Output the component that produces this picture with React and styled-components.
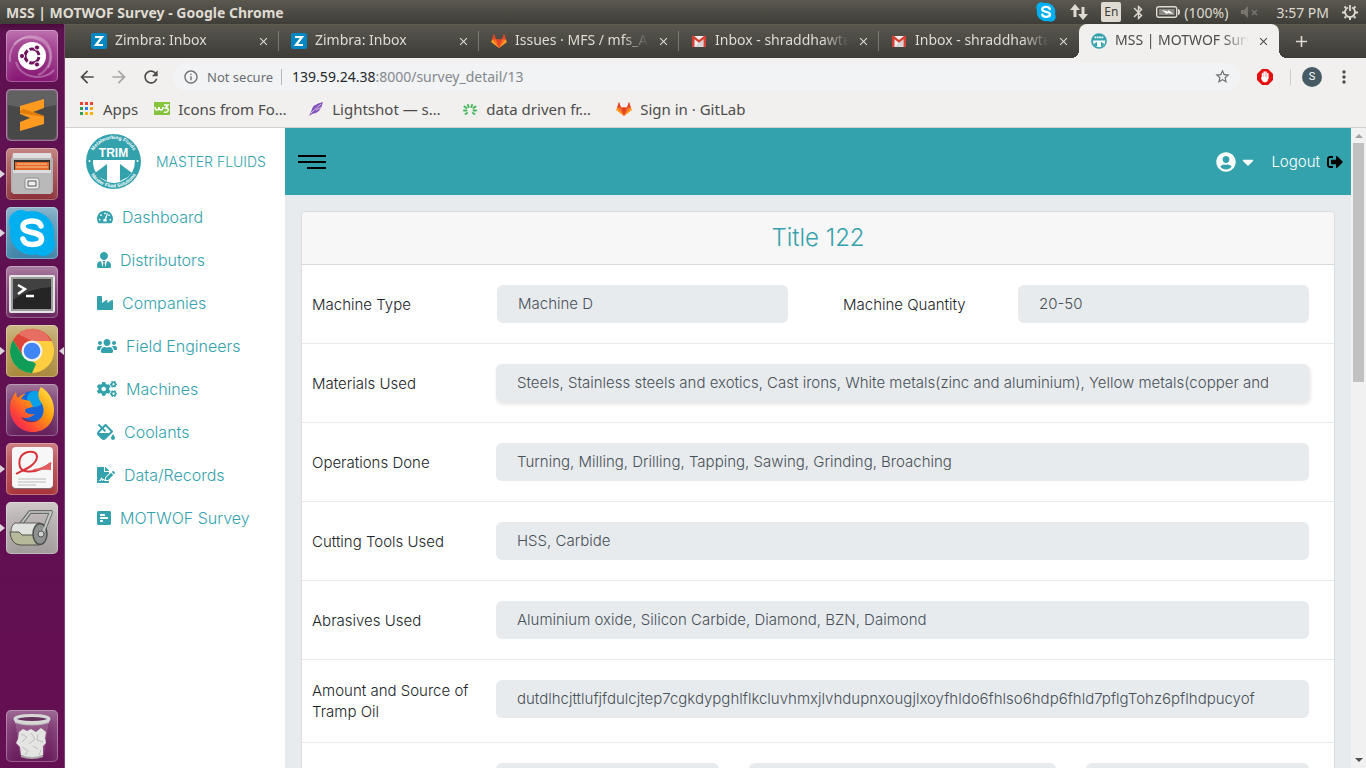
import React from 'react';
import styled, { createGlobalStyle, css } from 'styled-components';
import {
  FaTachometerAlt, FaUserTie, FaIndustry, FaUsers, FaCogs, FaFillDrip,
  FaFileSignature, FaPollH, FaUserCircle, FaCaretDown, FaSignOutAlt,
} from 'react-icons/fa';
import {
  MdArrowBack, MdArrowForward, MdRefresh, MdInfoOutline, MdStarBorder,
  MdMoreVert, MdClose, MdAdd, MdBluetooth,
} from 'react-icons/md';

const TEAL = '#34a2ad';
const CHROME_BG = '#f2f0ee';
const SYSTEM_FONT = '"Noto Sans", "Open Sans", sans-serif';
const PAGE_FONT = 'Inter, "Liberation Sans", sans-serif';

const GlobalStyle = createGlobalStyle`
  * { box-sizing: border-box; }
  body { margin: 0; font-family: ${SYSTEM_FONT}; overflow: hidden; }
  button { border: 0; padding: 0; background: none; font: inherit; color: inherit; cursor: pointer; }
  a { color: inherit; text-decoration: none; }
  svg { display: block; flex: none; }
`;

/* ---------- desktop ---------- */

const Desktop = styled.div`
  display: flex;
  flex-direction: column;
  height: 100vh;
`;

const TopPanel = styled.header`
  display: flex;
  align-items: center;
  justify-content: space-between;
  flex: none;
  height: 24px;
  padding: 0 8px 0 6px;
  color: #dfdbd2;
  font-size: 14px;
  background: linear-gradient(#5b584c 0, #58564d 2px, #3e3d38 100%);
`;

const WindowTitle = styled.span`
  font-weight: 700;
  font-size: 14px;
`;

const Indicators = styled.div`
  display: flex;
  align-items: center;
  gap: 13px;
`;

const Indicator = styled.span`
  display: flex;
  align-items: center;
  gap: 4px;
`;

const BluetoothIcon = styled(MdBluetooth)`
  margin: 0 -4px;
`;

const Clock = styled.span`
  margin-left: 4px;
`;

const KeyboardLayout = styled.span`
  width: 20px;
  border-radius: 2px;
  background: #dfdbd2;
  color: #3c3b37;
  font-size: 12px;
  line-height: 20px;
  text-align: center;
`;

const Workspace = styled.div`
  display: flex;
  flex: 1;
  min-height: 0;
`;

const Launcher = styled.nav`
  display: flex;
  flex-direction: column;
  flex: none;
  gap: 7px;
  width: 65px;
  padding: 6px 7px 6px 6px;
  border-right: 1px solid #7d4672;
  background: linear-gradient(#4a0b3c 0, #5e1150 8px, #640f52 100%);
`;

const LauncherButton = styled.button`
  position: relative;
  width: 52px;
  height: 52px;
  border-radius: 5px;
  background: ${(p) => p.$tint};
  box-shadow: inset 0 0 0 1px rgba(255, 255, 255, 0.28), inset 0 8px 12px rgba(255, 255, 255, 0.18);
  ${(p) => p.$last && css`margin-top: auto;`}
  ${(p) => p.$running && css`
    &::before {
      content: '';
      position: absolute;
      left: -6px;
      top: 22px;
      border: 4px solid transparent;
      border-left: 5px solid #dcd5da;
      border-right: 0;
    }
  `}
  ${(p) => p.$focused && css`
    &::after {
      content: '';
      position: absolute;
      right: -6px;
      top: 22px;
      border: 4px solid transparent;
      border-right: 5px solid #dcd5da;
      border-left: 0;
    }
  `}
`;

/* ---------- browser ---------- */

const Browser = styled.div`
  display: flex;
  flex-direction: column;
  flex: 1;
  min-width: 0;
`;

const TabStrip = styled.div`
  display: flex;
  align-items: stretch;
  flex: none;
  height: 34px;
  padding-left: 14px;
  color: #dfdbd2;
  font-size: 14px;
  background: linear-gradient(#66624f 0, #58564e 1px, #3d3c37 100%);
`;

const Tab = styled.div`
  position: relative;
  display: flex;
  align-items: center;
  gap: 8px;
  flex: 0 1 200px;
  min-width: 0;
  padding: 0 9px 0 12px;
  ${(p) => p.$active ? css`
    color: #4c4c4c;
    background: ${CHROME_BG};
    border-radius: 8px 8px 0 0;
    &::before, &::after {
      content: '';
      position: absolute;
      bottom: 0;
      width: 8px;
      height: 8px;
    }
    &::before { left: -8px; background: radial-gradient(circle at 0 0, transparent 8px, ${CHROME_BG} 8px); }
    &::after { right: -8px; background: radial-gradient(circle at 100% 0, transparent 8px, ${CHROME_BG} 8px); }
  ` : css`
    &::after {
      content: '';
      position: absolute;
      right: 0;
      top: 7px;
      width: 1px;
      height: 20px;
      background: ${p.$beforeActive ? 'transparent' : '#7b796f'};
    }
  `}
`;

const TabTitle = styled.button`
  flex: 1;
  min-width: 0;
  overflow: hidden;
  white-space: nowrap;
  text-align: left;
  line-height: 20px;
  padding-bottom: 2px;
  mask-image: linear-gradient(90deg, #000 calc(100% - 26px), transparent 100%);
`;

const NewTab = styled.button`
  margin-left: 13px;
`;

const Toolbar = styled.div`
  display: flex;
  align-items: center;
  flex: none;
  gap: 12px;
  height: 37px;
  padding: 0 12px;
  color: #4c4c4c;
  background: ${CHROME_BG};
`;

const ToolButton = styled.button`
  opacity: ${(p) => (p.disabled ? 0.45 : 1)};
`;

const AddressBar = styled.div`
  display: flex;
  align-items: center;
  flex: 1;
  min-width: 0;
  height: 28px;
  margin: 0 5px 0 0;
  padding: 0 9px 0 10px;
  border-radius: 14px;
  color: #6b6e72;
  font-size: 13px;
  background: #f1f3f5;
`;

const Security = styled.button`
  display: flex;
  align-items: center;
  gap: 8px;
  padding-right: 8px;
  border-right: 1px solid #b5b7ba;
  line-height: 16px;
  white-space: nowrap;
`;

const Address = styled.a`
  flex: 1;
  padding-left: 10px;
  color: #85888c;
  font-size: 14px;
  strong { font-weight: 400; color: #26282b; }
`;

const ToolDivider = styled.span`
  width: 1px;
  height: 16px;
  margin: 0 -1px 0 5px;
  background: #cfcdcb;
`;

const Avatar = styled.button`
  width: 20px;
  height: 20px;
  border-radius: 50%;
  color: #fff;
  background: #465a65;
  font: 11px/20px Roboto, sans-serif;
`;

const Bookmarks = styled.nav`
  display: flex;
  align-items: center;
  flex: none;
  height: 33px;
  gap: 16px;
  padding: 0 14px 4px;
  color: #4c4c4c;
  font-size: 15px;
  background: ${CHROME_BG};
  border-bottom: 1px solid #cfd0cf;
`;

const Bookmark = styled.a`
  display: flex;
  align-items: center;
  gap: 8px;
  width: ${(p) => (p.$short ? 'auto' : '138px')};
  line-height: 20px;
  white-space: nowrap;
`;

/* ---------- web page ---------- */

const Page = styled.div`
  display: flex;
  flex: 1;
  min-height: 0;
  font-family: ${PAGE_FONT};
  font-weight: 300;
  background: #e7ebee;
`;

const Sidebar = styled.aside`
  flex: none;
  width: 220px;
  color: ${TEAL};
  background: #fff;
`;

const Brand = styled.a`
  display: flex;
  align-items: center;
  gap: 15px;
  height: 67px;
  padding-left: 21px;
  font-size: 14px;
`;

const Menu = styled.ul`
  margin: 0;
  padding: 0 0 0 32px;
  list-style: none;
`;

const MenuLink = styled.a`
  display: flex;
  align-items: center;
  gap: 9px;
  height: 43px;
  font-size: 16px;
  svg { width: ${(p) => p.$iconWidth}px; height: 16px; }
`;

const Main = styled.main`
  flex: 1;
  min-width: 0;
  overflow: hidden;
`;

const AppBar = styled.header`
  display: flex;
  align-items: center;
  justify-content: space-between;
  height: 67px;
  padding: 0 8px 0 13px;
  color: #fff;
  background: ${TEAL};
`;

const Account = styled.div`
  display: flex;
  align-items: center;
  gap: 14px;
  font-size: 15px;
`;

const IconButton = styled.button`
  display: flex;
  align-items: center;
  gap: 3px;
`;

const LogoutLink = styled.a`
  display: flex;
  align-items: center;
  gap: 7px;
  svg { color: #000; }
`;

const Card = styled.section`
  margin: 16px;
  border: 1px solid #dadddf;
  border-radius: 4px;
  background: #fff;
`;

const CardTitle = styled.h1`
  margin: 0;
  border-bottom: 1px solid #d8d9da;
  border-radius: 4px 4px 0 0;
  color: ${TEAL};
  background: #f7f7f7;
  font-size: 24px;
  font-weight: 300;
  line-height: 52px;
  text-align: center;
`;

const Row = styled.div`
  display: grid;
  grid-template-columns: ${(p) => p.$columns || '184px 1fr'};
  align-items: start;
  padding: 20px 25px 20px 10px;
  border-bottom: 1px solid #e7ebee;
`;

const Label = styled.label`
  align-self: center;
  padding: 0 20px 0 ${(p) => (p.$inset ? '55px' : '0')};
  color: #212529;
  font-size: 15px;
  line-height: 21px;
`;

const Field = styled.input`
  width: 100%;
  min-width: 0;
  height: 38px;
  padding: 0 41px 1px 21px;
  border: 0;
  border-radius: 6px;
  color: #495057;
  background: #e7ebee;
  font: 300 15px ${PAGE_FONT};
  outline: 0;
  ${(p) => p.$raised && css`box-shadow: 1px 2px 4px rgba(0, 0, 0, 0.12);`}
`;

const FieldGroup = styled.div`
  display: grid;
  grid-template-columns: 223fr 307fr 223fr;
  gap: 30px;
`;

const ScrollBar = styled.div`
  display: flex;
  flex-direction: column;
  align-items: center;
  flex: none;
  width: 15px;
  padding: 6px 0;
  background: #f1f1f1;
`;

const ScrollArrow = styled.span`
  border: 4px solid transparent;
  ${(p) => p.$down
    ? css`border-top-color: #505050; border-bottom: 0; margin-top: auto;`
    : css`border-bottom-color: #a3a3a3; border-top: 0;`}
`;

const ScrollThumb = styled.span`
  width: 11px;
  height: 38%;
  margin-top: 5px;
  background: #c1c1c1;
`;

/* ---------- drawings ---------- */

const UbuntuIcon = () => (
  <svg width="52" height="52" viewBox="0 0 52 52">
    <g fill="none" stroke="#fff" strokeOpacity=".28" strokeWidth="2">
      <path d="M4 32C2 14 18 2 34 8c12 5 14 20 8 30" />
      <path d="M8 14C20 2 42 8 44 24c1 10-4 18-12 21" />
      <path d="M48 40C38 52 14 48 10 32" />
    </g>
    <circle cx="26" cy="26" r="14" fill="#fff" />
    <circle cx="26" cy="26" r="7" fill="none" stroke="#71135d" strokeWidth="3" strokeDasharray="12.6 2" strokeDashoffset="-1" />
    <g fill="#71135d" stroke="#fff">
      <circle cx="16" cy="26" r="2.6" /><circle cx="31" cy="17.5" r="2.6" /><circle cx="31" cy="34.5" r="2.6" />
    </g>
  </svg>
);

const SublimeIcon = () => (
  <svg width="52" height="52" viewBox="0 0 52 52">
    <rect x="2" y="2" width="48" height="48" rx="4" fill="#484848" />
    <path d="M2 6q0-4 4-4h40q4 0 4 4v10Q26 22 2 16z" fill="#777" opacity=".55" />
    <path d="M14 17 38 10v9l-11 4 11 4v8L14 42v-9l10-4-10-4z" fill="#ff9a20" />
    <path d="m14 24 24 4v-1l-11-4-10-3-3 2z" fill="#e07d08" />
  </svg>
);

const FilesIcon = () => (
  <svg width="52" height="52" viewBox="0 0 52 52">
    <path d="M7 5h38l2 14H5z" fill="#dedede" />
    <path d="M5 10h42v33q0 2-2 2H7q-2 0-2-2z" fill="#b3b3b3" />
    <path d="M8 12h36v10H8z" fill="#34302c" />
    <path d="M9 14h34v8H9z" fill="#e4682d" /><path d="M11 16h30M10 19h32" stroke="#ffc98b" />
    <path d="M7 22h38v24H7z" fill="#b9b9b9" /><path d="M7 22h38v3H7z" fill="#ddd" />
    <rect x="19" y="30" width="14" height="11" rx="2" fill="#ececec" stroke="#8a8a8a" />
    <rect x="22" y="33" width="8" height="5" fill="#eee" stroke="#555" />
  </svg>
);

const SkypeBlob = ({ size }) => (
  <svg width={size} height={size} viewBox="0 0 52 52">
    <circle cx="26" cy="26" r="22" fill="#00aff0" />
    <circle cx="15" cy="15" r="12" fill="#00aff0" /><circle cx="37" cy="37" r="12" fill="#00aff0" />
    <path d="M35 19c-1-4-5-5-9-5-5 0-9 2-9 5.500 0 4 4 5 9 6s9.500 2 9.500 6.500c0 4-4 5.500-9.500 5.500s-8-2-9-5.500" fill="none" stroke="#fff" strokeWidth="5.5" strokeLinecap="round" />
  </svg>
);

const TerminalIcon = () => (
  <svg width="52" height="52" viewBox="0 0 52 52">
    <rect x="3" y="9" width="46" height="38" rx="2" fill="#e4e4e4" />
    <rect x="5" y="11" width="42" height="34" fill="#9c9c9c" />
    <rect x="7" y="13" width="38" height="30" fill="#252525" />
    <path d="M7 13h38v8Q24 22 7 34z" fill="#555" opacity=".6" />
    <path d="m12 19 7 4-7 5M20 30h8" fill="none" stroke="#fff" strokeWidth="2.4" />
  </svg>
);

const ChromeIcon = () => (
  <svg width="52" height="52" viewBox="0 0 52 52">
    <circle cx="26" cy="26" r="22" fill="#ffcd40" />
    <path d="M7 15a22 22 0 0 1 39 1H26l-9 15z" fill="#db4437" />
    <path d="M12 9q14-10 28 0l5 7H26z" fill="#ef8a80" opacity=".6" />
    <path d="M7 15 17 31l9 5 4 3-4 9A22 22 0 0 1 7 15z" fill="#0f9d58" />
    <circle cx="26" cy="26" r="10.5" fill="#f1f1f1" /><circle cx="26" cy="26" r="8.3" fill="#4285f4" />
  </svg>
);

const FirefoxIcon = () => (
  <svg width="52" height="52" viewBox="0 0 52 52">
    <defs>
      <linearGradient id="fox" x1="1" y1="0" x2="0" y2="1">
        <stop offset="0" stopColor="#fff04f" /><stop offset=".4" stopColor="#ff9a0e" /><stop offset=".75" stopColor="#ff3d3d" /><stop offset="1" stopColor="#e5156b" />
      </linearGradient>
    </defs>
    <circle cx="27" cy="22" r="15" fill="#1565d8" /><circle cx="29" cy="15" r="8" fill="#0aa0e8" />
    <path d="M10 8q-7 8-6 18c1 12 10 22 23 22 12 0 21-9 21-22 0-9-4-17-13-23-4 6-3 11 0 15 4 6 4 15-4 19-7 3-14 0-16-4 5 2 9 1 14-3-5 1-10-1-10-4 1-2 4-2 8-3l-3-6-9-2q2-4 5-5-5 0-8 4-2-2-2-6z" fill="url(#fox)" />
  </svg>
);

const PdfIcon = () => (
  <svg width="52" height="52" viewBox="0 0 52 52">
    <rect x="6" y="6" width="41" height="40" rx="4" fill="#777" /><rect x="6" y="4" width="41" height="41" rx="4" fill="#f7f7f7" />
    <path d="M10 31C17 27 30 23 31 14c0-6-7-6-12-4-8 4-7 17 0 18 9 2 17-1 26-8" fill="none" stroke="#d8323a" strokeWidth="2" />
    <path d="M28 26q9-1 17-7v8q-8-1-20 1z" fill="#e35c60" />
    <path d="M12 36h28M12 39h28M12 42h18" stroke="#bbb" />
  </svg>
);

const RollerIcon = () => (
  <svg width="52" height="52" viewBox="0 0 52 52">
    <path d="M15 22 24 10h21L36 33" fill="none" stroke="#6a6e6b" strokeWidth="4" strokeLinejoin="round" />
    <path d="M15 22 24 10h21L36 33" fill="none" stroke="#c6cac7" strokeWidth="1.6" />
    <path d="M9 21h25v21H12q-8-3-7-12 0-7 4-9z" fill="#e0e2de" stroke="#5e605c" />
    <path d="M4 30h9l3 3h17v10H14q-9-1-10-13z" fill="#b7ba9a" stroke="#50524a" />
    <ellipse cx="34" cy="32" rx="7" ry="10.5" fill="#8d918f" stroke="#4d504e" strokeWidth="1.5" />
    <path d="M45 10 36 33" stroke="#c6cac7" strokeWidth="2" />
    <circle cx="35" cy="32" r="3" fill="#d0d2d0" stroke="#555" />
  </svg>
);

const TrashIcon = () => (
  <svg width="52" height="52" viewBox="0 0 52 52">
    <path d="m9 10 5 35q12 5 24 0l5-35z" fill="#fff" opacity=".15" />
    <path d="m13 22 4-3 4 2 4-2 5 3 5-4 5 4-1 6 1 5-3 3v9q-11 5-22 0l-1-8-4-4 2-4z" fill="#e4e4e2" />
    <path d="m15 24 6 3-5 5m9-9 4 6-6 5m9-10-1 6 6 2m-21 5 6 4-3 4m8-9 5 3m1 6 2-5" fill="none" stroke="#bdbdbd" />
    <path d="M9 10q17 7 34 0v3q-17 5-34 0z" fill="#bfbfbf" />
    <ellipse cx="26" cy="9" rx="17" ry="3.5" fill="#64305b" stroke="#d7d7d7" strokeWidth="3" />
    <path d="M15 46q11 4 22 0" fill="none" stroke="#aaa" strokeWidth="2" />
  </svg>
);

const ZimbraIcon = () => (
  <svg width="16" height="16" viewBox="0 0 16 16">
    <rect width="16" height="16" rx="2" fill="#0087c3" />
    <path d="M4 4h7L5 12h7" fill="none" stroke="#fff" strokeWidth="2.2" />
  </svg>
);

const GitlabIcon = () => (
  <svg width="16" height="16" viewBox="0 0 16 16">
    <path d="M3 1 .3 9 8 15l7.700-6L13 1l-2 5.500H5z" fill="#fc6d26" />
    <path d="m5 6.500 3 8.500 3-8.500z" fill="#e24329" />
    <path d="M.3 9 8 15 1.400 6.500zM15.700 9 8 15l6.600-8.500z" fill="#fca326" />
    <path d="m3 1 2 5.500H1.200zM13 1l-2 5.500h3.800z" fill="#e24329" />
  </svg>
);

const GmailIcon = () => (
  <svg width="16" height="16" viewBox="0 0 16 16">
    <path d="M1 3h14v11H1z" fill="#eee" /><path d="m8 9 4-3v8H4z" fill="#d6d6d6" />
    <path d="M1 14V3l1.500-.5L8 7l5.500-4.500L15 3v11h-2.500V6.200L8 9.800 3.500 6.200V14z" fill="#d54235" />
  </svg>
);

const TrimMark = () => (
  <>
    <path d="M7.200 26h41.600v2A20.800 20.800 0 0 1 7 28z" fill="#fff" />
    <path d="M21 30v17L13 43l-4-4zM34 30v17l8-4 4-4z" fill={TEAL} />
  </>
);

const TrimFavicon = () => (
  <svg width="16" height="16" viewBox="0 0 55 55">
    <circle cx="27.5" cy="27.5" r="27" fill={TEAL} />
    <path d="M12 15h31" stroke="#fff" strokeWidth="6" strokeDasharray="6 2" />
    <TrimMark />
  </svg>
);

const TrimLogo = () => (
  <svg width="55" height="55" viewBox="0 0 55 55" role="img" aria-label="TRIM">
    <defs>
      <path id="ring-top" d="M5 27.500a22.500 22.500 0 0 1 45 0" />
      <path id="ring-bottom" d="M1.500 27.500a26 26 0 0 0 52 0" />
    </defs>
    <circle cx="27.5" cy="27.5" r="27.5" fill={TEAL} />
    <TrimMark />
    <g fill="#fff" fontFamily="Liberation Sans, sans-serif" fontWeight="700" textAnchor="middle">
      <text x="27.5" y="22.5" fontSize="12">TRIM</text>
      <text fontSize="5"><textPath href="#ring-top" startOffset="50%">Metalworking Fluids</textPath></text>
      <text fontSize="5"><textPath href="#ring-bottom" startOffset="50%">Master Fluid Solutions</textPath></text>
    </g>
    <circle cx="3.5" cy="27" r="1" fill="#fff" /><circle cx="51.5" cy="27" r="1" fill="#fff" />
  </svg>
);

const AppsIcon = () => (
  <svg width="16" height="16" viewBox="-1 -1 16 16">
    <path d="M0 0h3v3H0zM5 0h3v3H5zM10 0h3v3h-3z" fill="#ea4335" />
    <path d="M0 5h3v3H0z" fill="#2f9e50" /><path d="M5 5h3v3H5z" fill="#2f80ed" /><path d="M10 5h3v3h-3z" fill="#f6a609" />
    <path d="M0 10h3v3H0z" fill="#2f9e50" /><path d="M5 10h3v3H5zM10 10h3v3h-3z" fill="#f6b409" />
  </svg>
);

const W3Icon = () => (
  <svg width="16" height="16" viewBox="0 0 16 16">
    <path d="M0 1h16v13H0z" fill="#86c440" />
    <path d="M1 6q0 3 2 3t2-3q0 3 2 3t2-3M10 4h4l-2.500 3Q15 7 14 10q-1 2-4 1" fill="none" stroke="#fff" strokeWidth="1.5" />
  </svg>
);

const FeatherIcon = () => (
  <svg width="16" height="16" viewBox="0 0 16 16">
    <path d="M15 1Q4 3 3 11l-2 4 3-2Q13 12 15 1z" fill="#8253b8" /><path d="M13 3 3 12M14 6l-6 3" stroke="#d9c2ee" />
  </svg>
);

const LeavesIcon = () => (
  <svg width="16" height="16" viewBox="0 0 16 16" fill="none" stroke="#43b85c" strokeWidth="2" strokeLinecap="round">
    <path d="m6 4 .6 2M10 4l-.6 2M2.500 5.500l2 1.500M13.500 5.500l-2 1.500M2 9.500h2.500M14 9.500h-2.500M3.500 13l1.500-1M12.500 13l-1.500-1" />
  </svg>
);

const BlockIcon = () => (
  <svg width="16" height="16" viewBox="0 0 16 16">
    <path d="M5 0h6l5 5v6l-5 5H5l-5-5V5z" fill="#e60f0f" />
    <path d="M5.500 9V4.500M7.200 8V3M9 8V3M10.800 9V4.500" stroke="#fff" strokeWidth="1.5" strokeLinecap="round" />
    <path d="M4.800 8h6.700q0 5-3.500 5.500Q5 13 4 9z" fill="#fff" />
  </svg>
);

const TransferIcon = () => (
  <svg width="18" height="18" viewBox="0 0 18 18" fill="#dfdbd2">
    <path d="M5 1 0 7h3.500v7h3V7H10zM13 17l5-6h-3.500V4h-3v7H8z" />
  </svg>
);

const BatteryIcon = () => (
  <svg width="24" height="14" viewBox="0 0 24 14">
    <rect x=".7" y="1.7" width="20" height="10.6" rx="2" fill="none" stroke="#dfdbd2" strokeWidth="1.4" />
    <rect x="3" y="4" width="15.5" height="6" fill="#8c8982" /><path d="M22 4q2 0 2 3t-2 3z" fill="#dfdbd2" />
    <path d="m6 5 6 1.500.5-1.500 5 4-6-1-.5 1.500z" fill="#fff" />
  </svg>
);

const MutedIcon = () => (
  <svg width="18" height="14" viewBox="0 0 18 14">
    <path d="M0 5h3l4-4v12L3 9H0z" fill="#77756e" /><path d="m11 5 5 5m0-5-5 5" stroke="#77756e" strokeWidth="1.5" />
  </svg>
);

const PowerIcon = () => (
  <svg width="16" height="16" viewBox="0 0 16 16" fill="none" stroke="#dfdbd2">
    <path d="M6 3.500a5 5 0 1 0 4 0M8 1v6" strokeWidth="1.8" />
    <path d="m2.500 2.500 1.500 1.500m9.500-1.500-1.500 1.500M0 8.500h3m10 0h3M2.500 14l1.500-1.500m9.500 1.500-1.500-1.500M8 13.500V16" strokeWidth="2" />
  </svg>
);

const HamburgerIcon = () => (
  <svg width="28" height="16" viewBox="0 0 28 16">
    <path d="M0 2h28M0 8h28M9 14h19" stroke="#000" strokeWidth="2" />
  </svg>
);

/* ---------- data ---------- */

const LAUNCHER = [
  { name: 'Search', icon: <UbuntuIcon />, tint: 'linear-gradient(#b0569f, #861673)' },
  { name: 'Sublime Text', icon: <SublimeIcon />, tint: '#6d4a66' },
  { name: 'Files', icon: <FilesIcon />, tint: 'linear-gradient(#b8706c, #8c3039)', running: true },
  { name: 'Skype', icon: <SkypeBlob size={52} />, tint: 'linear-gradient(#76a8c2, #3f82a9)', running: true },
  { name: 'Terminal', icon: <TerminalIcon />, tint: 'linear-gradient(#9a6590, #66235a)' },
  { name: 'Google Chrome', icon: <ChromeIcon />, tint: 'linear-gradient(#c3aa6d, #a9883c)', running: true, focused: true },
  { name: 'Firefox', icon: <FirefoxIcon />, tint: 'linear-gradient(#8d5a85, #641f5b)' },
  { name: 'Document Viewer', icon: <PdfIcon />, tint: 'linear-gradient(#c3666a, #a93239)', running: true },
  { name: 'Disk Cleaner', icon: <RollerIcon />, tint: 'linear-gradient(#c6bfc0, #a29b9c)', running: true },
  { name: 'Trash', icon: <TrashIcon />, tint: 'linear-gradient(#8a4a80, #681b5a)', last: true },
];

const TABS = [
  { title: 'Zimbra: Inbox', icon: <ZimbraIcon /> },
  { title: 'Zimbra: Inbox', icon: <ZimbraIcon /> },
  { title: 'Issues · MFS / mfs_A', icon: <GitlabIcon /> },
  { title: 'Inbox - shraddhawte', icon: <GmailIcon /> },
  { title: 'Inbox - shraddhawte', icon: <GmailIcon />, beforeActive: true },
  { title: 'MSS | MOTWOF Surv', icon: <TrimFavicon />, active: true },
];

const BOOKMARKS = [
  { title: 'Apps', icon: <AppsIcon />, short: true },
  { title: 'Icons from Fo…', icon: <W3Icon /> },
  { title: 'Lightshot — s…', icon: <FeatherIcon /> },
  { title: 'data driven fr…', icon: <LeavesIcon /> },
  { title: 'Sign in · GitLab', icon: <GitlabIcon /> },
];

/* name, icon, icon width at a height of 16px */
const MENU = [
  ['Dashboard', FaTachometerAlt, 16],
  ['Distributors', FaUserTie, 14],
  ['Companies', FaIndustry, 16],
  ['Field Engineers', FaUsers, 20],
  ['Machines', FaCogs, 20],
  ['Coolants', FaFillDrip, 18],
  ['Data/Records', FaFileSignature, 18],
  ['MOTWOF Survey', FaPollH, 14],
];

const ANSWERS = [
  { id: 'materials', label: 'Materials Used', value: 'Steels, Stainless steels and exotics, Cast irons, White metals(zinc and aluminium), Yellow metals(copper and', raised: true },
  { id: 'operations', label: 'Operations Done', value: 'Turning, Milling, Drilling, Tapping, Sawing, Grinding, Broaching' },
  { id: 'tools', label: 'Cutting Tools Used', value: 'HSS, Carbide' },
  { id: 'abrasives', label: 'Abrasives Used', value: 'Aluminium oxide, Silicon Carbide, Diamond, BZN, Daimond' },
  { id: 'tramp', label: 'Amount and Source of Tramp Oil', value: 'dutdlhcjttlufjfdulcjtep7cgkdypghlflkcluvhmxjlvhdupnxougjlxoyfhldo6fhlso6hdp6fhld7pflgTohz6pflhdpucyof' },
];

export default function App() {
  return (
    <Desktop>
      <GlobalStyle />
      <TopPanel>
        <WindowTitle>MSS | MOTWOF Survey - Google Chrome</WindowTitle>
        <Indicators>
          <SkypeBlob size={22} />
          <TransferIcon />
          <KeyboardLayout>En</KeyboardLayout>
          <BluetoothIcon size={17} />
          <Indicator><BatteryIcon />(100%)</Indicator>
          <MutedIcon />
          <Clock>3:57 PM</Clock>
          <PowerIcon />
        </Indicators>
      </TopPanel>
      <Workspace>
        <Launcher>
          {LAUNCHER.map((a) => (
            <LauncherButton key={a.name} aria-label={a.name} $tint={a.tint} $running={a.running} $focused={a.focused} $last={a.last}>
              {a.icon}
            </LauncherButton>
          ))}
        </Launcher>
        <Browser>
          <TabStrip>
            {TABS.map((t, i) => (
              <Tab key={i} $active={t.active} $beforeActive={t.beforeActive}>
                {t.icon}
                <TabTitle>{t.title}</TabTitle>
                <button aria-label="Close tab"><MdClose size={13} /></button>
              </Tab>
            ))}
            <NewTab aria-label="New tab"><MdAdd size={19} /></NewTab>
          </TabStrip>
          <Toolbar>
            <ToolButton aria-label="Back"><MdArrowBack size={20} /></ToolButton>
            <ToolButton aria-label="Forward" disabled><MdArrowForward size={20} /></ToolButton>
            <ToolButton aria-label="Reload"><MdRefresh size={20} /></ToolButton>
            <AddressBar>
              <Security><MdInfoOutline size={16} />Not secure</Security>
              <Address href="#survey"><strong>139.59.24.38</strong>:8000/survey_detail/13</Address>
              <button aria-label="Bookmark this page"><MdStarBorder size={17} /></button>
            </AddressBar>
            <ToolButton aria-label="Ad blocker"><BlockIcon /></ToolButton>
            <ToolDivider />
            <Avatar>S</Avatar>
            <ToolButton aria-label="Menu"><MdMoreVert size={20} /></ToolButton>
          </Toolbar>
          <Bookmarks>
            {BOOKMARKS.map((b) => (
              <Bookmark key={b.title} href="#bookmark" $short={b.short}>{b.icon}<span>{b.title}</span></Bookmark>
            ))}
          </Bookmarks>
          <Page>
            <Sidebar>
              <Brand href="#home"><TrimLogo />MASTER FLUIDS</Brand>
              <Menu>
                {MENU.map(([name, Icon, iconWidth]) => (
                  <li key={name}><MenuLink href="#menu" $iconWidth={iconWidth}><Icon />{name}</MenuLink></li>
                ))}
              </Menu>
            </Sidebar>
            <Main>
              <AppBar>
                <button aria-label="Toggle sidebar"><HamburgerIcon /></button>
                <Account>
                  <IconButton aria-label="Account"><FaUserCircle size={20} /><FaCaretDown size={18} /></IconButton>
                  <LogoutLink href="#logout">Logout<FaSignOutAlt size={16} /></LogoutLink>
                </Account>
              </AppBar>
              <Card>
                <CardTitle>Title 122</CardTitle>
                <Row $columns="185px 1fr 230px 1fr">
                  <Label htmlFor="type">Machine Type</Label>
                  <Field id="type" readOnly defaultValue="Machine D" />
                  <Label htmlFor="quantity" $inset>Machine Quantity</Label>
                  <Field id="quantity" readOnly defaultValue="20-50" />
                </Row>
                {ANSWERS.map((a) => (
                  <Row key={a.id}>
                    <Label htmlFor={a.id}>{a.label}</Label>
                    <Field id={a.id} readOnly defaultValue={a.value} $raised={a.raised} />
                  </Row>
                ))}
                <Row>
                  <Label htmlFor="measured">How you measured concentration</Label>
                  <FieldGroup>
                    <Field id="measured" readOnly />
                    <Field aria-label="Method" readOnly />
                    <Field aria-label="Result" readOnly />
                  </FieldGroup>
                </Row>
              </Card>
            </Main>
            <ScrollBar>
              <ScrollArrow />
              <ScrollThumb />
              <ScrollArrow $down />
            </ScrollBar>
          </Page>
        </Browser>
      </Workspace>
    </Desktop>
  );
}
